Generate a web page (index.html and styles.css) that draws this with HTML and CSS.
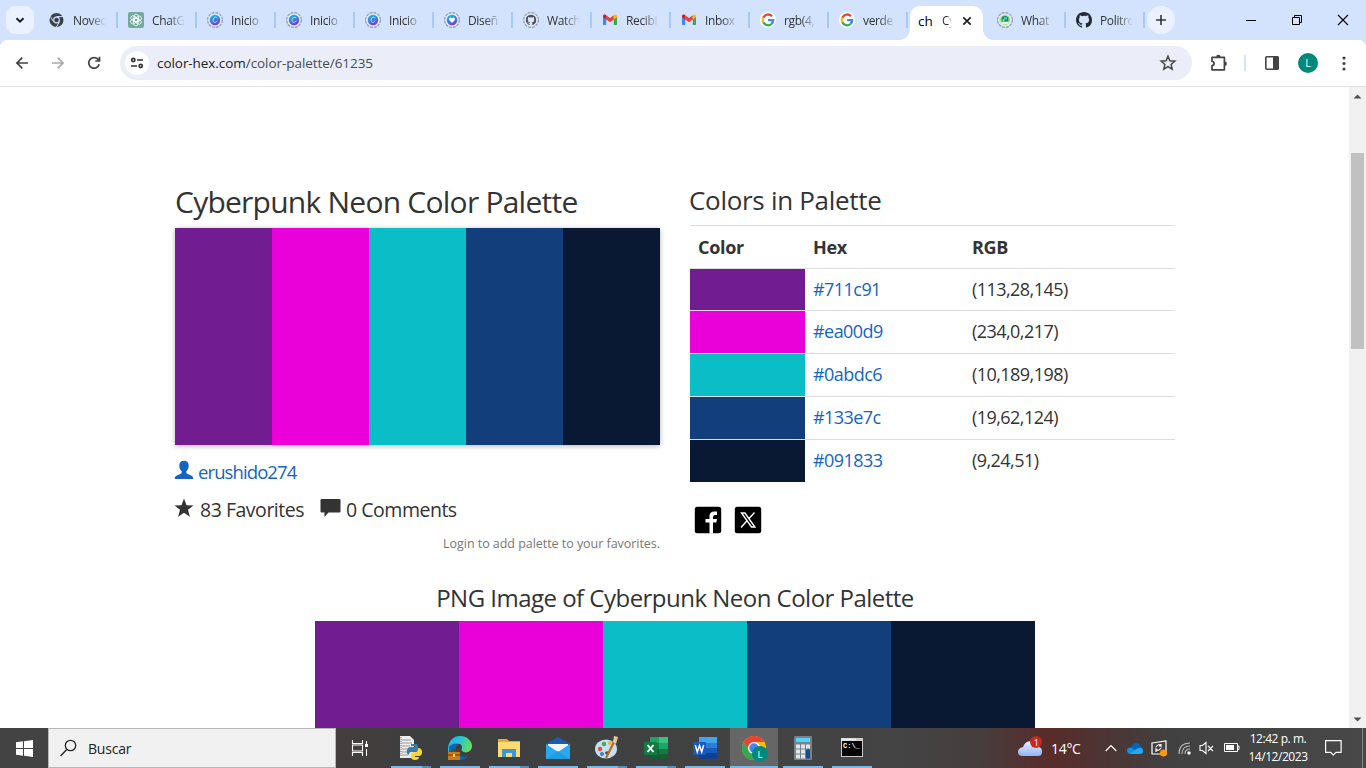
FILE: index.html
```html
<!DOCTYPE html>
<html lang="es">
<head>
<meta charset="utf-8">
<title>Cyberpunk Neon Color Palette</title>
<link rel="stylesheet" href="styles.css">
</head>
<body>
<svg class="defs" aria-hidden="true">
  <defs>
    <linearGradient id="canva" x1="0.2" y1="0" x2="0.6" y2="1"><stop offset="0" stop-color="#08c4cf"/><stop offset="1" stop-color="#7b35e8"/></linearGradient>
    <linearGradient id="edgeg" x1="0" y1="0.2" x2="1" y2="0.4"><stop offset="0" stop-color="#25b4ef"/><stop offset=".5" stop-color="#25c6d4"/><stop offset="1" stop-color="#6ae052"/></linearGradient>
    <linearGradient id="cloudg" x1="0" y1="0" x2="0" y2="1"><stop offset="0" stop-color="#e8f1ff"/><stop offset="1" stop-color="#92b4f4"/></linearGradient>
  </defs>
  <symbol id="ring" viewBox="0 0 16 16"><circle cx="8" cy="8" r="7.4" fill="#dde6f5" stroke="#8d97a8" stroke-width="1.1" stroke-dasharray="2.9 1"/></symbol>
  <symbol id="canva-c" viewBox="0 0 16 16"><use href="#ring"/><circle cx="8" cy="8" r="5.2" fill="url(#canva)"/><path d="M10 6.300C9.800 4.600 7 4.700 6.200 7.200c-.7 2.400.7 3.600 2.200 3.100 1-.3 1.500-.9 1.900-1.600" fill="none" stroke="#d5f0ff" stroke-width=".8"/></symbol>
  <symbol id="gh" viewBox="0 0 16 16"><path d="M8 0C3.58 0 0 3.58 0 8c0 3.54 2.29 6.53 5.47 7.59.4.07.55-.17.55-.38 0-.19-.01-.82-.01-1.49-2.01.37-2.53-.49-2.69-.94-.09-.23-.48-.94-.82-1.13-.28-.15-.68-.52-.01-.53.63-.01 1.08.58 1.23.82.72 1.21 1.87.87 2.33.66.07-.52.28-.87.51-1.07-1.78-.2-3.64-.89-3.64-3.95 0-.87.31-1.59.82-2.15-.08-.2-.36-1.02.08-2.12 0 0 .67-.21 2.2.82A7.6 7.6 0 0 1 8 3.86c.68 0 1.36.09 2 .27 1.53-1.04 2.2-.82 2.2-.82.44 1.1.16 1.92.08 2.12.51.56.82 1.27.82 2.15 0 3.07-1.87 3.75-3.65 3.95.29.25.54.73.54 1.48 0 1.07-.01 1.93-.01 2.2 0 .21.15.46.55.38A8 8 0 0 0 16 8c0-4.42-3.58-8-8-8"/></symbol>
  <symbol id="gmail" viewBox="0 0 16 16"><path d="M1 4v8.2c0 .5.4.9.9.9h2.3V7.2z" fill="#4285f4"/><path d="M15 4v8.2c0 .5-.4.9-.9.9h-2.3V7.2z" fill="#34a853"/><path d="M4.2 3.2v4.3L8 10.2l3.8-2.7V3.2L8 6z" fill="#ea4335"/><path d="M1 4.2c0-1.7 1.6-2.2 2.6-1.5l.6.5v4.3L1 5.1z" fill="#c5221f"/><path d="M15 4.2c0-1.7-1.6-2.2-2.6-1.5l-.6.5v4.3L15 5.1z" fill="#fbbc04"/></symbol>
  <symbol id="google" viewBox="0 0 16 16"><circle cx="8" cy="8" r="8" fill="#fff"/><g fill="none" stroke-width="2.3"><path d="M12 4.3A5.2 5.2 0 0 0 3.3 5.7" stroke="#ea4335"/><path d="M3.3 5.7a5.2 5.2 0 0 0 0 4.6" stroke="#fbbc05"/><path d="M3.3 10.3A5.2 5.2 0 0 0 11.4 12" stroke="#34a853"/><path d="M11.4 12c1.2-1 1.8-2.3 1.8-3.9H8.1" stroke="#4285f4"/></g></symbol>
</svg>

<div class="tabstrip">
  <button class="tab-search"><svg width="14" height="14" viewBox="0 0 14 14"><path d="M3.500 5.200 7 8.700l3.500-3.500" fill="none" stroke="#1f1f1f" stroke-width="2"/></svg></button>
  <div class="tabs">
    <div class="tab"><svg class="fav" viewBox="0 0 16 16"><circle cx="7.500" cy="8" r="7" fill="#3c4147"/><circle cx="7.500" cy="8" r="3.400" fill="#d3e3fd"/><circle cx="7.500" cy="8" r="2.300" fill="#3c4147"/><path d="M7.500 4.600h6.400M4.500 9.700 1.400 4.400M10.500 9.700l-3.100 5.300" stroke="#d3e3fd" stroke-width="1"/></svg><span class="tt">Noved</span></div>
    <div class="tab"><svg class="fav" viewBox="0 0 16 16"><rect width="16" height="16" rx="2.200" fill="#74aa9c"/><g fill="none" stroke="#fff" stroke-width=".8"><rect x="6" y="2.200" width="4.400" height="7.800" rx="2.200"/><rect x="6" y="2.200" width="4.400" height="7.800" rx="2.200" transform="rotate(60 8 8)"/><rect x="6" y="2.200" width="4.400" height="7.800" rx="2.200" transform="rotate(120 8 8)"/><rect x="6" y="2.200" width="4.400" height="7.800" rx="2.200" transform="rotate(180 8 8)"/><rect x="6" y="2.200" width="4.400" height="7.800" rx="2.200" transform="rotate(240 8 8)"/><rect x="6" y="2.200" width="4.400" height="7.800" rx="2.200" transform="rotate(300 8 8)"/></g></svg><span class="tt">ChatG</span></div>
    <div class="tab"><svg class="fav"><use href="#canva-c"/></svg><span class="tt">Inicio</span></div>
    <div class="tab"><svg class="fav"><use href="#canva-c"/></svg><span class="tt">Inicio</span></div>
    <div class="tab"><svg class="fav"><use href="#canva-c"/></svg><span class="tt">Inicio</span></div>
    <div class="tab"><svg class="fav" viewBox="0 0 16 16"><use href="#ring"/><circle cx="8" cy="8" r="5.200" fill="url(#canva)"/><path d="M8 11 5.400 8.200C4.200 6.500 6.400 4.500 8 6.300c1.600-1.800 3.800.2 2.600 1.900z" fill="#fff"/></svg><span class="tt">Diseñ</span></div>
    <div class="tab"><svg class="fav" viewBox="0 0 16 16"><use href="#ring"/><svg x="2.800" y="2.800" width="10.400" height="10.400" fill="#444c5a"><use href="#gh"/></svg></svg><span class="tt">Watch</span></div>
    <div class="tab"><svg class="fav"><use href="#gmail"/></svg><span class="tt">Recibi</span></div>
    <div class="tab"><svg class="fav"><use href="#gmail"/></svg><span class="tt">Inbox</span></div>
    <div class="tab"><svg class="fav"><use href="#google"/></svg><span class="tt">rgb(4,</span></div>
    <div class="tab"><svg class="fav"><use href="#google"/></svg><span class="tt">verde</span></div>
    <div class="tab-slot"><div class="tab-active"><span class="ch">ch</span><span class="tt cy">Cy</span><svg width="10" height="10" viewBox="0 0 10 10"><path d="m1.300 1.300 7.400 7.400m0-7.400L1.300 8.700" stroke="#1f1f1f" stroke-width="1.700"/></svg></div></div>
    <div class="tab"><svg class="fav" viewBox="0 0 16 16"><use href="#ring"/><circle cx="8" cy="8" r="5" fill="#a9e86c"/><path d="M4.500 9.500V5.500q3.500-3.500 7 0v4z" fill="#168a65"/><path d="M7 5h3v2.500H7z" fill="#39c6df"/><path d="M5.500 7h2v2h-2z" fill="#8ee03e"/><path d="M4 10h8l-1 2H5z" fill="#e9ecf2"/></svg><span class="tt">What</span></div>
    <div class="tab"><svg class="fav" fill="#24292f"><use href="#gh"/></svg><span class="tt">Politro</span></div>
  </div>
  <button class="newtab"><svg width="12" height="12" viewBox="0 0 12 12"><path d="M6 1v10M1 6h10" stroke="#333" stroke-width="1.600"/></svg></button>
  <div class="winbtns">
    <svg width="12" height="12"><path d="M1 6.500h10" stroke="#000"/></svg>
    <svg width="12" height="12" fill="none" stroke="#000"><path d="M1.500 3.500h7v7h-7zM3.500 3.500v-2h7v7h-2"/></svg>
    <svg width="12" height="12" stroke="#000" stroke-width="1.100"><path d="m1 1 10 10M11 1 1 11"/></svg>
  </div>
</div>

<div class="toolbar">
  <svg class="nav" viewBox="0 0 16 16"><path d="M14 8H3M8.300 2.600 2.900 8l5.400 5.400" stroke="#444" stroke-width="1.700"/></svg>
  <svg class="nav" viewBox="0 0 16 16"><path d="M2 8h11M7.700 2.600 13.100 8l-5.400 5.400" stroke="#aaa" stroke-width="1.600"/></svg>
  <svg class="nav" viewBox="0 0 16 16"><path d="M13.200 9.200a5.300 5.300 0 1 1-1.300-5l1.600 1.700M13.500 1.800v4.200H9.300" stroke="#444" stroke-width="1.700"/></svg>
  <div class="omnibox">
    <span class="site"><svg width="14" height="14" viewBox="0 0 14 14" fill="none" stroke="#333" stroke-width="1.700"><circle cx="3.300" cy="4" r="1.600"/><path d="M7 4h6M1 10h6"/><circle cx="10.700" cy="10" r="1.600"/></svg></span>
    <span class="url">color-hex.com<span class="path">/color-palette/61235</span></span>
    <svg class="star" width="18" height="18" viewBox="0 0 18 18"><path d="m9 2.300 1.900 4.500 4.900.4-3.700 3.200 1.100 4.800L9 12.700l-4.200 2.500 1.100-4.800-3.700-3.200 4.900-.4z" fill="none" stroke="#444" stroke-width="1.500"/></svg>
  </div>
  <svg class="puzzle" width="18" height="18" viewBox="0 0 18 18"><path d="M2 3.300h4.800h7.600v4.500v8H2v-4.200c2.800-.2 2.800-3.900 0-4.100z" fill="none" stroke="#444" stroke-width="1.700" stroke-linejoin="round"/><path d="M6.200 3a2.200 2.200 0 0 1 4.400 0zM14.700 7.500a2.200 2.200 0 0 1 0 4.400z" fill="#444"/></svg>
  <i class="sep"></i>
  <svg class="panel" width="16" height="16" viewBox="0 0 16 16"><rect x="1.800" y="1.800" width="12.400" height="12.400" rx="1" fill="none" stroke="#444" stroke-width="1.600"/><path d="M9 1.500h5.500v13H9z" fill="#444"/></svg>
  <span class="avatar">L</span>
  <svg class="dots" width="4" height="16" fill="#444"><circle cx="2" cy="3" r="1.600"/><circle cx="2" cy="8.500" r="1.600"/><circle cx="2" cy="14" r="1.600"/></svg>
</div>

<div class="viewport">
  <main class="page">
    <div class="cols">
      <section class="left">
        <h1>Cyberpunk Neon Color Palette</h1>
        <div class="palette"><i class="c1"></i><i class="c2"></i><i class="c3"></i><i class="c4"></i><i class="c5"></i></div>
        <div class="user"><svg width="20" height="20" viewBox="0 0 20 20" fill="#1565c0"><path d="M10 .8c3 0 4.700 2 4.700 4.800 0 2.500-1 4.600-2.400 5.700v1.300c0 1.200 1.500 1.500 3.300 2.200 2.300.8 3.600 1.600 3.700 4.200H.7c.1-2.600 1.400-3.400 3.700-4.200 1.800-.7 3.300-1 3.300-2.200v-1.300C6.300 10.200 5.300 8.100 5.300 5.600 5.300 2.800 7 .8 10 .8z"/></svg><a>erushido274</a></div>
        <div class="stats"><svg width="20" height="20" viewBox="0 0 20 20" fill="#333"><path d="m10 .5 2.500 6.700 7 .3-5.500 4.300 1.900 6.900-5.900-3.900-5.900 3.900L6 11.800.5 7.500l7-.3z"/></svg><span class="fv">83 Favorites</span><svg class="bubble" width="21" height="20" viewBox="0 0 21 20" fill="#333"><path d="M1.500 1h18q1 0 1 1v11.500q0 1-1 1H8.500L4.500 19v-4.500h-3q-1 0-1-1V2q0-1 1-1z"/></svg><span class="cm">0 Comments</span></div>
        <div class="login"><span>Login to add palette to your favorites.</span></div>
      </section>
      <section class="right">
        <h2>Colors in Palette</h2>
        <table>
          <tr><th>Color</th><th>Hex</th><th>RGB</th></tr>
          <tr class="short"><td class="c1"></td><td><a>#711c91</a></td><td>(113,28,145)</td></tr>
          <tr><td class="c2"></td><td><a>#ea00d9</a></td><td>(234,0,217)</td></tr>
          <tr><td class="c3"></td><td><a>#0abdc6</a></td><td>(10,189,198)</td></tr>
          <tr><td class="c4"></td><td><a>#133e7c</a></td><td>(19,62,124)</td></tr>
          <tr class="short"><td class="c5"></td><td><a>#091833</a></td><td>(9,24,51)</td></tr>
        </table>
        <div class="share">
          <svg width="28" height="28" viewBox="0 0 28 28"><rect x=".8" y=".8" width="26.400" height="26.400" rx="2.500" fill="#000"/><path d="M15.500 27.500V16.500h-4v-3.500h4V10q0-4.500 5-4.500h2.500v3.500h-2q-2 0-2 2v2h4l-.6 3.500h-3.400v11z" fill="#fff"/></svg>
          <svg width="28" height="28" viewBox="0 0 28 28"><rect x=".8" y=".8" width="26.400" height="26.400" rx="2.500" fill="#000"/><path d="M7.500 7h3.400l10 14h-3.400zM20.500 6.500l-6.200 6.800m-1.500 1.700L7 21.500" fill="none" stroke="#fff" stroke-width="1.400"/></svg>
        </div>
      </section>
    </div>
    <section class="png">
      <h3>PNG Image of Cyberpunk Neon Color Palette</h3>
      <div class="bigpal"><i class="c1"></i><i class="c2"></i><i class="c3"></i><i class="c4"></i><i class="c5"></i></div>
    </section>
  </main>
  <div class="scroll"><svg width="9" height="5"><path d="M.5 4.500h8L4.500.5z" fill="#505050"/></svg><i class="thumb"></i><svg width="9" height="5"><path d="M.5.500h8l-4 4z" fill="#505050"/></svg></div>
</div>

<div class="taskbar">
  <div class="start"><svg width="17" height="17" viewBox="0 0 17 17" fill="#fff"><path d="M0 2.300 7 1.300V8H0zM8 1.200 17 0v8H8zM0 9h7v6.700l-7-1zM8 9h9v8l-9-1.200z"/></svg></div>
  <div class="search"><svg width="17" height="18" viewBox="0 0 17 18" fill="none" stroke="#222" stroke-width="1.300"><circle cx="10.500" cy="6.500" r="5.200"/><path d="M6.700 10.500.6 17"/></svg><span>Buscar</span></div>
  <div class="taskview"><svg width="18" height="16" viewBox="0 0 18 16" fill="none" stroke="#fff" stroke-width="1.100"><path d="M1.500 0v3.500h10V0M1.500 16v-3.500h10V16M1.500 5h10v6h-10zM15.500 1v3M15.500 9v7"/><path d="M14 4h3v3h-3z" fill="#fff" stroke="none"/></svg></div>
  <div class="apps">
    <div class="app split"><svg viewBox="0 0 24 24"><path d="M1 0h10l4 4v18H1z" fill="#eee"/><path d="M3 4h9M3 7h10M3 10h8M3 13h6M3 16h6M3 19h6" stroke="#999"/><path d="M2 1v20" stroke="#555" stroke-dasharray="1 1"/><path d="M12 8h5q2 0 2 2v4q0 2-2 2h-5q-2 0-2 3-3-1-2-5 1-3 3-3h5v-1h-4z" fill="#397bab"/><path d="M19 12q4 0 4 4t-3 4h-4v1h4q0 3-4 3t-4-3v-2q0-3 3-3h2q2 0 2-4z" fill="#ffd43b"/></svg></div>
    <div class="app"><svg viewBox="0 0 24 24"><path d="M0 12C1 4 6 0 12 0c7 0 12 5 12 10 0 6-7 8-10 5-1-1 0-2 0-4 0-3-3-4-6-3-5 1-8 6-7 11Q-1 16 0 12z" fill="url(#edgeg)"/><path d="M1 11Q5 6 10 8q-5 5 0 10 4 4 10 2-5 6-12 3Q0 20 1 11z" fill="#0c66b8"/><path d="M0 16h12v8H0z" fill="#c87919"/><path d="M0 19h12M4 16v-2h4v2" stroke="#6d3b0d" fill="none"/><path d="M5 18h2v3H5z" fill="#ffd35a"/></svg></div>
    <div class="app split"><svg viewBox="0 0 24 24"><path d="M1 3h9l2 2h11v16H1z" fill="#e7a925"/><path d="M1 6h22v15H1z" fill="#ffdb72"/><path d="M5 13h14v8h-4v-4H9v4H5z" fill="#3c97d8"/></svg></div>
    <div class="app"><svg viewBox="0 0 24 24"><path d="m0 8 12-7 12 7v3H0z" fill="#1761b1"/><path d="M2 8h20v10H2z" fill="#f2f4f7"/><path d="m0 8 12 8 12-8v15H0z" fill="#2aa9ee"/><path d="m0 23 12-8 12 8z" fill="#1e9de4"/></svg></div>
    <div class="app split"><svg viewBox="0 0 24 24"><ellipse cx="11" cy="13" rx="11" ry="9.500" fill="#c6e0f3"/><circle cx="5" cy="13" r="2.200" fill="#e74c3c"/><circle cx="9" cy="8" r="2.200" fill="#51a653"/><circle cx="15" cy="7" r="2" fill="#e8b62b"/><circle cx="7" cy="18" r="2" fill="#3d78d3"/><circle cx="12" cy="17" r="1.800" fill="#444"/><path d="m11 22 9-18" stroke="#bd6a25" stroke-width="2.300"/><path d="m18 6 1-6 4 1-2 7z" fill="#edc79c"/></svg></div>
    <div class="app split"><svg viewBox="0 0 24 24"><path d="M6 1h18v22H6z" fill="#185c37"/><path d="M6 1h9v6H6z" fill="#21a366"/><path d="M15 1h9v6h-9z" fill="#33c481"/><path d="M6 7h9v6H6z" fill="#107c41"/><path d="M15 7h9v6h-9z" fill="#21a366"/><path d="M15 13h9v5h-9z" fill="#107c41"/><rect y="6" width="13" height="13" rx="1" fill="#107c41"/><path d="m3.500 9 6 7m0-7-6 7" stroke="#fff" stroke-width="1.900"/></svg></div>
    <div class="app"><svg viewBox="0 0 24 24"><path d="M6 1h18v22H6z" fill="#103f91"/><path d="M6 1h18v6H6z" fill="#41a5ee"/><path d="M6 7h18v5H6z" fill="#2b7cd3"/><path d="M6 12h18v5H6z" fill="#185abd"/><rect y="6" width="13" height="13" rx="1" fill="#185abd"/><path d="m2.300 9 2 7L6.500 9.500 8.700 16l2-7" fill="none" stroke="#fff" stroke-width="1.500"/></svg></div>
    <div class="app current"><svg class="chrome" viewBox="0 0 26 26"><circle cx="12" cy="12" r="12" fill="#fbbc04"/><path d="M1.600 6A12 12 0 0 1 22.400 6H12L7 15z" fill="#ea4335"/><path d="M1.600 6a12 12 0 0 0 10.400 18l5-9-10 0z" fill="#34a853"/><circle cx="12" cy="12" r="6" fill="#fff"/><circle cx="12" cy="12" r="4.700" fill="#4285f4"/><circle cx="18" cy="18" r="8" fill="#00897b"/><text x="15.500" y="21.500" class="mini">L</text></svg></div>
    <div class="app"><svg viewBox="0 0 24 24"><rect x="3" width="18" height="24" rx="1" fill="#77828f"/><path d="M5 2h14v4H5z" fill="#52d5fa"/><g fill="#e1e5e8"><path d="M5 8.500h4v4H5zm5 0h4v4h-4zm5 0h4v4h-4zM5 13.500h4v4H5zm5 0h4v4h-4zM5 18.500h4v4H5zm5 0h4v4h-4z"/></g><path d="M15 13.500h4v9h-4z" fill="#154d8c"/></svg></div>
    <div class="app"><svg viewBox="0 0 24 24"><path d="M1 2h22v19H1z" fill="#ccc"/><path d="M2 5h20v15H2z" fill="#050505"/><path d="M1 3.500h15" stroke="#eee" stroke-width="2"/><text x="3" y="11.500" class="cmd">C:\_</text></svg></div>
  </div>
  <div class="tray">
    <div class="weather"><svg width="27" height="22" viewBox="0 0 27 22"><path d="M5 20q-5 0-5-4t5-5q2-6 8-6 6 0 7 6 4 0 4 4.500T20 20z" fill="url(#cloudg)"/><circle cx="18" cy="6" r="6" fill="#c42b1c"/><text x="15.700" y="9.500" class="badge">1</text></svg><span>14°C</span></div>
    <svg class="chev" width="12" height="8"><path d="m.7 7 5.300-5.500L11.300 7" fill="none" stroke="#fff" stroke-width="1.200"/></svg>
    <svg class="cloud" width="16" height="11"><path d="M3 11Q0 10 0 7t4-3q2-4 5-4 4 0 5 4 2 1 2 4t-3 3z" fill="#0364b8"/><path d="M3 11Q0 10 0 7q1-3 5-2l7 6z" fill="#1490df"/><path d="m3 11 5-4q7-5 8 1 0 3-3 3z" fill="#28a8ea"/></svg>
    <svg class="sync" width="17" height="17" fill="none" stroke="#fff" stroke-width="1.200"><path d="M1 3 15 1v13L1 14z"/><path d="M5 7q3-4 5-1V4m0 2H8M10 8q-3 4-5 1v3m0-2h2"/><circle cx="12.500" cy="13" r="3.500" fill="#ff9800" stroke="none"/></svg>
    <svg class="wifi" width="14" height="14" fill="none"><path d="M1 13Q1 2 12 2M4 13q0-8 8-8M7 13q0-5 5-5" stroke="#bbb" stroke-width="1.100"/><circle cx="11" cy="12" r="1.700" fill="#fff"/></svg>
    <svg class="vol" width="16" height="14" fill="none" stroke="#fff" stroke-width="1.100"><path d="M1 4.500h2.500L7 1.500v11L3.500 9.500H1zM9 5l5 5m0-5-5 5"/></svg>
    <svg class="bat" width="16" height="10"><path d="M.5.500h13v8H.5zM14 3h1v3.500h-1" fill="none" stroke="#fff"/><path d="M2 2h8v5H2z" fill="#fff"/></svg>
    <div class="clock"><span class="time">12:42 p. m.</span><span class="date">14/12/2023</span></div>
    <svg class="note" width="17" height="16"><path d="M.6.600h15.500v11.800h-5L8.300 15l-2.700-2.600h-5z" fill="none" stroke="#fff" stroke-width="1.200"/></svg>
    <i class="desk"></i>
  </div>
</div>
</body>
</html>
```
FILE: styles.css
```css
* { box-sizing: border-box; }
body { margin: 0; width: 1366px; height: 768px; overflow: hidden; font-family: "Open Sans", "Noto Sans", sans-serif; background: #fff; color: #333; display: flex; flex-direction: column; }
svg { display: block; flex: none; }
.defs { position: absolute; width: 0; height: 0; }
button { border: 0; padding: 0; display: flex; align-items: center; justify-content: center; background: #ebf1fe; flex: none; }

.tabstrip { height: 40px; flex: none; background: #d3e3fd; display: flex; align-items: flex-start; }
.tab-search { width: 28px; height: 28px; margin: 6px 5px 0 6px; border-radius: 9px; }
.tabs { display: flex; height: 40px; }
.tab { width: 79px; padding: 0 0 0 10px; display: flex; align-items: center; gap: 8px; height: 40px; background: linear-gradient(#a8c7fa, #a8c7fa) right center / 2px 16px no-repeat; }
.fav { width: 16px; height: 16px; }
.tt { width: 33px; padding-top: 1px; white-space: nowrap; font-size: 12px; line-height: 18px; letter-spacing: -.35px; -webkit-mask-image: linear-gradient(90deg, #000 50%, transparent 100%); mask-image: linear-gradient(90deg, #000 50%, transparent 100%); }
.tab-slot { width: 79px; padding: 6px 0 0 2px; }
.tab-active { height: 34px; width: 73px; background: #fff; border-radius: 10px 10px 0 0; display: flex; align-items: center; padding: 0 0 5px 8px; position: relative; }
.tab-active::before, .tab-active::after { content: ""; position: absolute; bottom: 0; width: 10px; height: 10px; }
.tab-active::before { left: -10px; background: radial-gradient(circle at 0 0, transparent 9.5px, #fff 10px); }
.tab-active::after { right: -10px; background: radial-gradient(circle at 100% 0, transparent 9.5px, #fff 10px); }
.ch { font-size: 13.500px; width: 24px; line-height: 20px; color: #000; }
.cy { width: 10px; margin-right: 10px; }
.newtab { width: 28px; height: 28px; border-radius: 50%; margin: 6px 0 0 2px; }
.winbtns { margin-left: auto; display: flex; gap: 34px; padding: 14px 17px 0 0; }

.toolbar { height: 47px; flex: none; display: flex; align-items: center; border-bottom: 1px solid #dfe1e5; background: radial-gradient(circle at 8px 8px, #fff 8px, #d3e3fd 8.500px) 0 0 / 8px 8px no-repeat, radial-gradient(circle at 0 8px, #fff 8px, #d3e3fd 8.500px) 100% 0 / 8px 8px no-repeat, #fff; padding-left: 14px; }
.nav { width: 16px; height: 16px; margin-right: 20px; fill: none; }
.omnibox { width: 1072px; height: 34px; margin-left: -2px; border-radius: 17px; background: #ebeef8; display: flex; align-items: center; padding: 0 15px 0 5px; }
.site { width: 24px; height: 24px; border-radius: 50%; background: #fff; display: flex; align-items: center; justify-content: center; }
.url { margin-left: 8px; font-size: 13.500px; line-height: 20px; letter-spacing: -.06px; color: #202124; }
.path { color: #474b50; }
.star { margin-left: auto; }
.puzzle { margin-left: 18px; }
.sep { width: 2px; height: 16px; background: #d3e3fd; margin: 0 18px 0 16px; }
.panel { margin-left: 0; }
.avatar { width: 20px; height: 20px; margin: 0 24px 0 18px; border-radius: 50%; background: #00897b; color: #fff; font-size: 11px; line-height: 20px; text-align: center; }

.viewport { height: 641px; flex: none; display: flex; }
.page { width: 1349px; padding: 96px 174px 0 175px; overflow: hidden; }
.cols { display: flex; gap: 30px; height: 400px; }
.left, .right { width: 485px; }
h1, h2, h3 { font-weight: 400; margin: 0; white-space: nowrap; }
h1 { font-size: 30px; line-height: 38px; height: 45px; letter-spacing: -.76px; }
h2 { font-size: 26px; line-height: 34px; height: 42px; letter-spacing: -.3px; margin-left: -1px; }
.c1 { background: #711c91; } .c2 { background: #ea00d9; } .c3 { background: #0abdc6; } .c4 { background: #133e7c; } .c5 { background: #091833; }
.palette { height: 217px; display: flex; box-shadow: 0 1px 5px rgba(0,0,0,.3); }
.palette i, .bigpal i { flex: 1; }
a { color: #1565c0; }
.user { display: flex; align-items: center; height: 30px; margin-top: 11px; margin-left: -1px; font-size: 18.500px; gap: 4px; letter-spacing: -.9px; }
.stats { display: flex; align-items: center; height: 30px; margin-top: 8px; margin-left: -1px; font-size: 19.500px; white-space: nowrap; }
.user svg, .stats svg { margin-top: -2px; }
.fv { margin-left: 6px; width: 120px; letter-spacing: -.48px; }
.cm { margin-left: 5px; letter-spacing: -.48px; }
.login { text-align: right; font-size: 12.500px; line-height: 20px; margin-top: 10px; color: #777; letter-spacing: -.04px; }
table { width: 485px; border-collapse: collapse; table-layout: fixed; font-size: 18px; }
tr { height: 43px; }
.short { height: 42px; }
th, td { text-align: left; border-top: 1px solid #ddd; padding: 0 8px; line-height: 25px; letter-spacing: -.55px; }
td { padding-bottom: 1px; }
th { font-weight: 700; letter-spacing: -.3px; }
th:nth-child(1) { width: 115px; } th:nth-child(2) { width: 159px; }
.share { display: flex; gap: 12px; padding: 24px 0 0 4px; }
h3 { font-size: 24px; line-height: 30px; height: 38px; text-align: center; letter-spacing: -.52px; }
.bigpal { width: 720px; height: 110px; margin: 0 0 0 140px; display: flex; }
.scroll { width: 17px; background: #f1f1f1; display: flex; flex-direction: column; align-items: center; padding: 7px 0 6px; }
.thumb { width: 13px; height: 196px; background: #c1c1c1; margin: 54px 0 auto; }

.taskbar { height: 40px; flex: none; display: flex; color: #fff; background: linear-gradient(90deg, #434343 0, #453e3e 340px, #3d3e3f 420px, #444 900px, #463d3d 980px, #582c2a 1050px, #4b3635 1110px, #414141 1170px, #484848 1366px); }
.start { width: 48px; display: flex; align-items: center; justify-content: center; }
.search { width: 288px; background: #f1f1f1; border: 1px solid #b8b8b8; display: flex; align-items: center; padding-left: 11px; gap: 11px; color: #222; font-size: 14px; letter-spacing: -.2px; }
.taskview { width: 51px; padding: 12px 0 0 15px; }
.apps { display: flex; }
.app { width: 49px; height: 40px; padding: 8px 0 0 12px; background: linear-gradient(#76b9ed, #76b9ed) 4px 38px / 40px 2px no-repeat; }
.app svg { width: 24px; height: 24px; }
.split { background: linear-gradient(90deg, #76b9ed 31px, #5a8fb5 31px) 4px 38px / 40px 2px no-repeat; }
.current { background: linear-gradient(#76b9ed, #76b9ed) 0 38px / 48px 2px no-repeat, linear-gradient(#666, #666) 0 0 / 48px 40px no-repeat; }
.app .chrome { width: 26px; height: 26px; }
.mini { font-size: 9.500px; fill: #fff; }
.cmd { font: 700 7px "Liberation Mono", monospace; fill: #fff; }
.badge { font-size: 9px; fill: #fff; }
.tray { display: flex; align-items: center; margin-left: 141px; }
.weather { display: flex; align-items: center; gap: 6px; width: 87px; font-size: 14px; letter-spacing: -.3px; }
.weather svg { margin-top: -3px; }
.chev { margin-right: 10px; } .cloud { margin-right: 8px; } .sync { margin-right: 10px; } .wifi { margin-right: 7px; } .vol { margin-right: 9px; }
.clock { width: 76px; margin-right: 9px; display: flex; flex-direction: column; align-items: center; font-size: 12px; line-height: 18px; white-space: nowrap; letter-spacing: -.45px; }
.desk { width: 1px; height: 40px; background: #888; margin-left: 20px; }
```
